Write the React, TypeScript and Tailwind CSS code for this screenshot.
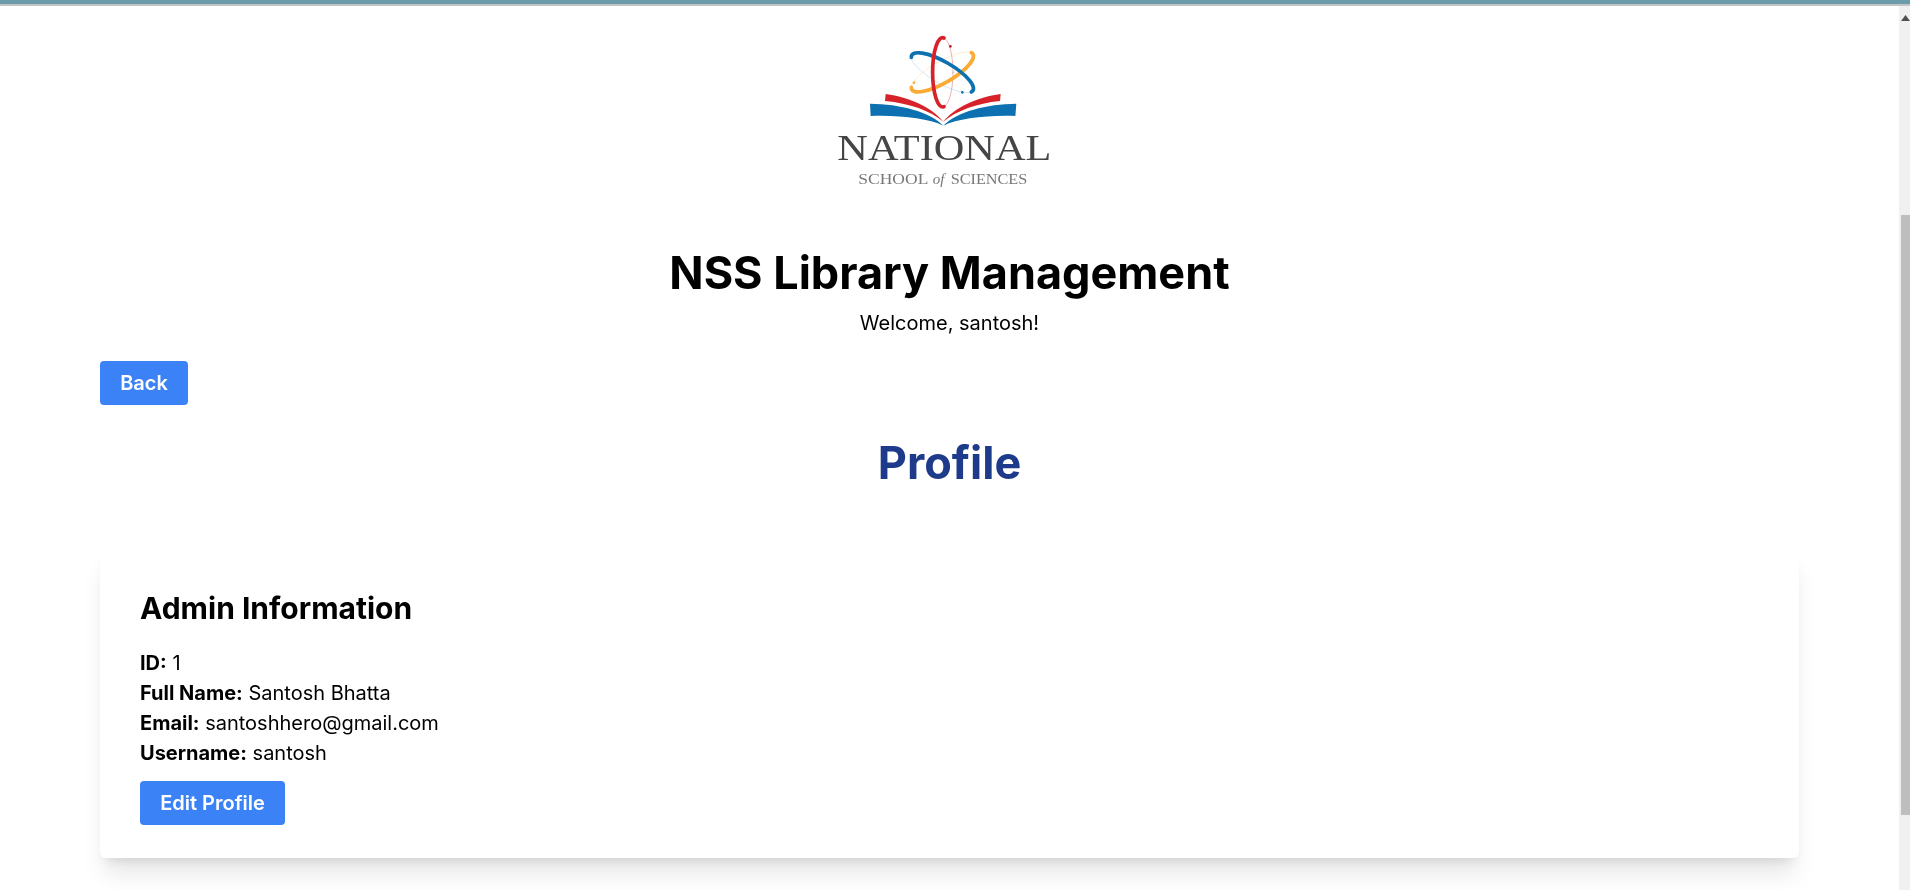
const Logo = () => (
  <svg viewBox="0 0 780 540" className="block w-[260px] h-[180px]" aria-label="National School of Sciences logo">
    <defs>
      <filter id="soft"><feGaussianBlur stdDeviation="0.9" /></filter>
    </defs>
    <g filter="url(#soft)">
      <path d="M197 222 C270 232 335 262 370 305 C330 272 270 250 195 243 Z" fill="#d8232a" />
      <path d="M542 222 C470 232 405 262 370 305 C410 272 470 250 540 243 Z" fill="#d8232a" />
      <path d="M150 251 C240 252 330 275 370 317 C325 295 240 285 152 288 Z" fill="#0a6fb0" />
      <path d="M589 251 C500 252 410 275 370 317 C415 295 500 285 586 288 Z" fill="#0a6fb0" />
      <g transform="translate(368 157)" fill="none" strokeLinecap="round">
        <ellipse rx="108" ry="34" transform="rotate(30)" stroke="#c5dcee" strokeWidth="2" />
        <ellipse rx="108" ry="34" transform="rotate(-30)" stroke="#fde4bf" strokeWidth="2" />
        <ellipse rx="31" ry="104" stroke="#e58a8a" strokeWidth="2" />
        <path d="M8 -104 A33 106 0 1 0 8 104" transform="rotate(240)" stroke="#f9ab35" strokeWidth="11" />
        <path d="M8 -104 A33 106 0 1 0 8 104" transform="rotate(120)" stroke="#0a6fb0" strokeWidth="11" />
        <path d="M4 -103 A30 104 0 1 0 4 103" stroke="#d8232a" strokeWidth="11" />
      </g>
      <circle cx="391" cy="79" r="4" fill="#b81f25" />
      <circle cx="427" cy="217" r="4" fill="#0a6fb0" />
      <circle cx="282" cy="188" r="4" fill="#f9ab35" />
      <text x="52" y="420" textLength="642" lengthAdjust="spacingAndGlyphs" fontFamily="'Liberation Serif', serif" fontSize="108" fill="#444446">NATIONAL</text>
      <text x="115" y="492" fontFamily="'Liberation Serif', serif" fontSize="45" fill="#77777a" textLength="210" lengthAdjust="spacingAndGlyphs">SCHOOL</text>
      <text x="338" y="492" fontFamily="'Liberation Serif', serif" fontStyle="italic" fontSize="45" fill="#77777a">of</text>
      <text x="392" y="492" fontFamily="'Liberation Serif', serif" fontSize="45" fill="#77777a" textLength="230" lengthAdjust="spacingAndGlyphs">SCIENCES</text>
    </g>
  </svg>
);

const Row = ({ label, value }: { label: string; value: string }) => (
  <p className="text-[20px] leading-[30px]">
    <strong className="font-bold">{label}</strong> {value}
  </p>
);

export default function App() {
  return (
    <div className="h-[890px] overflow-hidden flex flex-col bg-white text-black font-['Inter',sans-serif]">
      <div className="h-[4px] shrink-0 bg-[#6a9ca9]" />
      <div className="h-[2px] shrink-0 bg-[#c4c4c4]" />
      <div className="flex flex-1 min-h-0">
        <main className="flex-1 min-w-0 px-[100px]">
          <div className="flex justify-center pt-[14px]">
            <Logo />
          </div>
          <h1 className="mt-[43px] text-center text-[45px] leading-[60px] font-bold">NSS Library Management</h1>
          <p className="mt-[6px] text-center text-[20px] leading-[28px]">Welcome, santosh!</p>
          <div className="mt-[24px]">
            <button className="h-[44px] w-[88px] rounded bg-[#3b82f6] text-white text-[20px] font-semibold">Back</button>
          </div>
          <h2 className="mt-[24px] text-center text-[45px] leading-[68px] font-bold text-[#1e3a8a]">Profile</h2>
          <section className="mt-[51px] rounded-md bg-white pt-[40px] px-[40px] pb-[33px] shadow-xl">
            <h3 className="text-[30px] leading-[40px] font-bold mb-[20px]">Admin Information</h3>
            <Row label="ID:" value="1" />
            <Row label="Full Name:" value="Santosh Bhatta" />
            <Row label="Email:" value="santoshhero@gmail.com" />
            <Row label="Username:" value="santosh" />
            <button className="mt-[13px] h-[44px] w-[145px] rounded bg-[#3b82f6] text-white text-[20px] font-semibold">Edit Profile</button>
          </section>
        </main>
        <div className="w-[11px] shrink-0 bg-[#f0f0f0] flex flex-col items-end">
          <svg viewBox="0 0 9 6" className="w-[9px] h-[6px] mt-[9px] shrink-0"><path d="M4.5 0 L9 6 L0 6 Z" fill="#505050" /></svg>
          <div className="mt-[194px] h-[600px] w-[9px] bg-[#bebebe]" />
        </div>
      </div>
    </div>
  );
}
